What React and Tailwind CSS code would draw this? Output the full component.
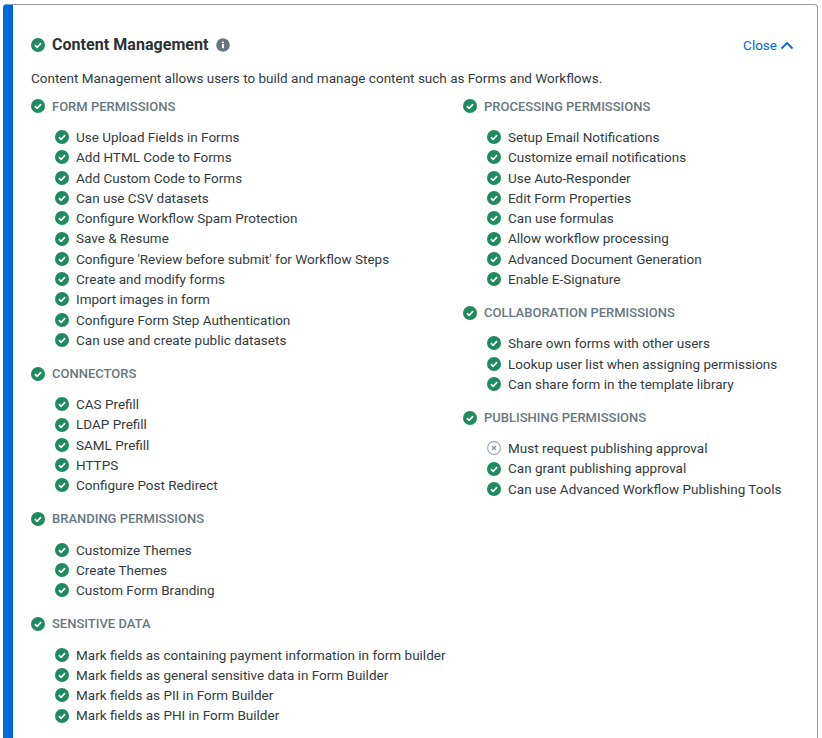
import React from "react";

const leftSections = [
  {
    title: "FORM PERMISSIONS",
    items: [
      "Use Upload Fields in Forms",
      "Add HTML Code to Forms",
      "Add Custom Code to Forms",
      "Can use CSV datasets",
      "Configure Workflow Spam Protection",
      "Save & Resume",
      "Configure 'Review before submit' for Workflow Steps",
      "Create and modify forms",
      "Import images in form",
      "Configure Form Step Authentication",
      "Can use and create public datasets",
    ],
  },
  {
    title: "CONNECTORS",
    items: ["CAS Prefill", "LDAP Prefill", "SAML Prefill", "HTTPS", "Configure Post Redirect"],
  },
  {
    title: "BRANDING PERMISSIONS",
    items: ["Customize Themes", "Create Themes", "Custom Form Branding"],
  },
  {
    title: "SENSITIVE DATA",
    items: [
      "Mark fields as containing payment information in form builder",
      "Mark fields as general sensitive data in Form Builder",
      "Mark fields as PII in Form Builder",
      "Mark fields as PHI in Form Builder",
    ],
  },
];

const rightSections = [
  {
    title: "PROCESSING PERMISSIONS",
    items: [
      "Setup Email Notifications",
      "Customize email notifications",
      "Use Auto-Responder",
      "Edit Form Properties",
      "Can use formulas",
      "Allow workflow processing",
      "Advanced Document Generation",
      "Enable E-Signature",
    ],
  },
  {
    title: "COLLABORATION PERMISSIONS",
    items: [
      "Share own forms with other users",
      "Lookup user list when assigning permissions",
      "Can share form in the template library",
    ],
  },
  {
    title: "PUBLISHING PERMISSIONS",
    items: ["!Must request publishing approval", "Can grant publishing approval", "Can use Advanced Workflow Publishing Tools"],
  },
];

function CheckIcon() {
  return (
    <svg width="14" height="14" viewBox="0 0 14 14" className="shrink-0">
      <circle cx="7" cy="7" r="7" fill="#1f8a5f" />
      <path d="M3.9 7.2l2.2 2.1 4-4.2" fill="none" stroke="#fff" strokeWidth="1.7" />
    </svg>
  );
}

function DeniedIcon() {
  return (
    <svg width="14" height="14" viewBox="0 0 14 14" className="shrink-0">
      <circle cx="7" cy="7" r="6.4" fill="none" stroke="#9aa5ab" strokeWidth="1.1" />
      <path d="M5 5l4 4M9 5l-4 4" fill="none" stroke="#7d8a91" strokeWidth="1.1" />
    </svg>
  );
}

function Section({ section }) {
  return (
    <div className="mb-[13.5px]">
      <div className="flex items-center gap-[7px] h-[20px]">
        <CheckIcon />
        <span className="text-[13px] font-medium text-[#68777f]">{section.title}</span>
      </div>
      <ul className="mt-[10.5px] ml-[24px]">
        {section.items.map((item) => {
          const denied = item.startsWith("!");
          return (
            <li key={item} className="flex items-center gap-[7px] h-[20.3px] text-[13.5px] text-[#333b40]">
              {denied ? <DeniedIcon /> : <CheckIcon />}
              <span>{denied ? item.slice(1) : item}</span>
            </li>
          );
        })}
      </ul>
    </div>
  );
}

export default function App() {
  return (
    <div className="h-[738px] overflow-hidden bg-white pt-[4px] pl-[3px] pr-[4px] font-['Roboto',sans-serif]">
      <div className="h-[760px] bg-white border border-[#9b9b9b] border-l-[10px] border-l-[#0067dc] rounded-[4px] pt-[30px] pl-[18px] pr-[23px]">
        <div className="flex items-center justify-between h-[20px]">
          <div className="flex items-center gap-[7px]">
            <CheckIcon />
            <h2 className="text-[16px] font-bold text-[#2b3236] tracking-[0.05px]">Content Management</h2>
            <svg width="14" height="14" viewBox="0 0 14 14">
              <circle cx="7" cy="7" r="6.8" fill="#68777f" />
              <rect x="6" y="6" width="2" height="4.2" fill="#fff" />
              <rect x="6" y="3.6" width="2" height="1.6" fill="#fff" />
            </svg>
          </div>
          <a className="flex items-center gap-[3px] text-[13.5px] text-[#0067dc]">
            Close
            <svg width="14" height="9" viewBox="0 0 14 9">
              <path d="M1.5 7.5L7 2l5.5 5.5" fill="none" stroke="#0067dc" strokeWidth="1.8" />
            </svg>
          </a>
        </div>
        <p className="mt-[13px] text-[13.5px] text-[#333b40] h-[20px]">
          Content Management allows users to build and manage content such as Forms and Workflows.
        </p>
        <div className="mt-[8.4px] flex">
          <div className="w-[432px]">
            {leftSections.map((s) => (
              <Section key={s.title} section={s} />
            ))}
          </div>
          <div>
            {rightSections.map((s) => (
              <Section key={s.title} section={s} />
            ))}
          </div>
        </div>
      </div>
    </div>
  );
}
